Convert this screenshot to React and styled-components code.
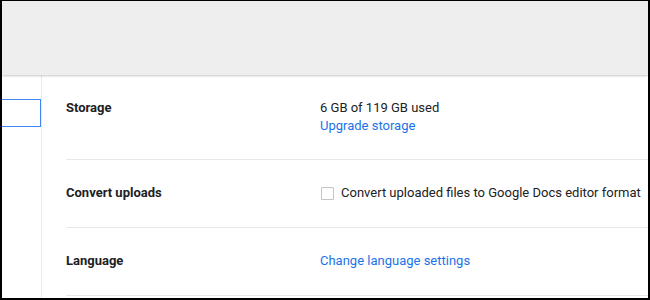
import React from 'react'
import styled, { createGlobalStyle } from 'styled-components'

const Global = createGlobalStyle`
body {
  margin: 0;
  font-family: Roboto, "Liberation Sans", sans-serif;
  background: #000;
}
`

const Frame = styled.div`
width: 650px;
height: 300px;
box-sizing: border-box;
border-style: solid;
border-color: #000;
border-width: 1px 2px 2px 2px;
background: #fff;
overflow: hidden;
display: flex;
flex-direction: column;
`

const Header = styled.div`
height: 74px;
flex-shrink: 0;
background: #eeeeee;
box-shadow: 0 1px 2px rgba(0, 0, 0, 0.22);
position: relative;
z-index: 1;
`

const Body = styled.div`
flex: 1;
display: flex;
min-height: 0;
`

const Sidebar = styled.div`
width: 39px;
flex-shrink: 0;
border-right: 1px solid #ebebeb;
padding-top: 24px;
`

const SelectedBox = styled.div`
height: 26px;
border: 1px solid #4285f4;
border-left: none;
`

const Content = styled.div`
flex: 1;
padding-left: 24px;
padding-top: 1px;
`

const Row = styled.div`
display: flex;
align-items: ${p => (p.top ? 'flex-start' : 'center')};
padding: ${p => (p.top ? '23px 0 24px' : '24px 0 25px')};
border-bottom: 1px solid #e8e8e8;
`

const Label = styled.div`
width: 254px;
flex-shrink: 0;
font-size: 13px;
line-height: 18px;
font-weight: 700;
color: #202124;
`

const Value = styled.div`
font-size: 13px;
line-height: 18px;
color: #202124;
display: flex;
flex-direction: column;
`

const Link = styled.a`
color: #1a73e8;
text-decoration: none;
font-size: 13px;
line-height: 18px;
`

const CheckLine = styled.label`
display: flex;
align-items: center;
gap: 7px;
font-size: 13px;
line-height: 18px;
color: #202124;
`

const Box = styled.span`
width: 11px;
height: 11px;
margin-left: 1px;
border: 1px solid #c4c4c4;
border-radius: 1px;
`

export default function App() {
  return (
    <>
      <Global />
      <Frame>
        <Header />
        <Body>
          <Sidebar>
            <SelectedBox />
          </Sidebar>
          <Content>
            <Row top>
              <Label>Storage</Label>
              <Value>
                <span>6 GB of 119 GB used</span>
                <Link href="#">Upgrade storage</Link>
              </Value>
            </Row>
            <Row>
              <Label>Convert uploads</Label>
              <CheckLine>
                <Box />
                Convert uploaded files to Google Docs editor format
              </CheckLine>
            </Row>
            <Row>
              <Label>Language</Label>
              <Link href="#">Change language settings</Link>
            </Row>
          </Content>
        </Body>
      </Frame>
    </>
  )
}
